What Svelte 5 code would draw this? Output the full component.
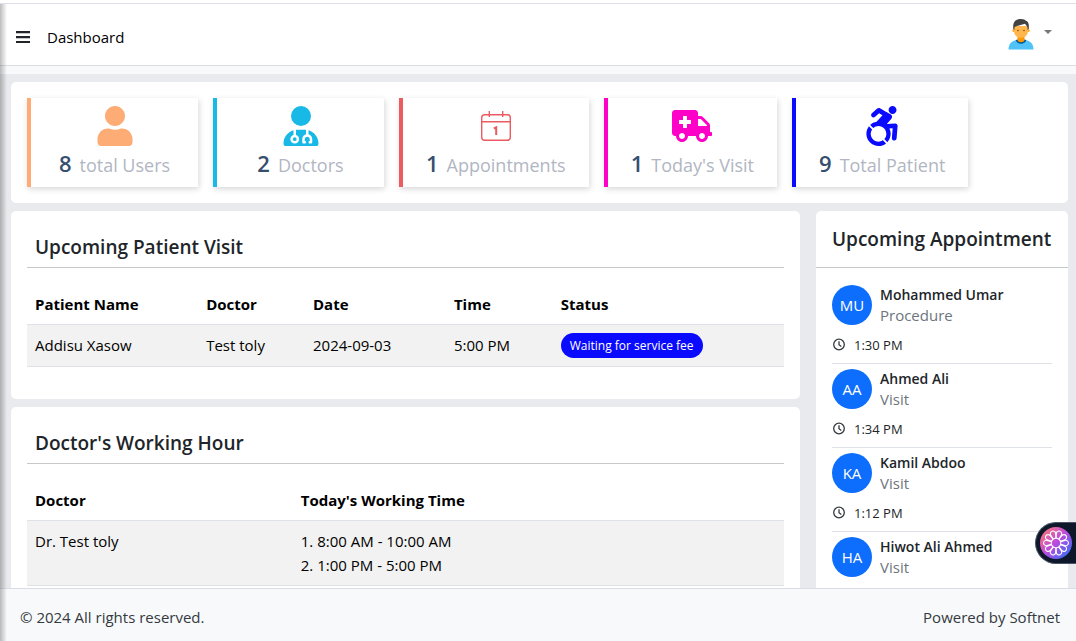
<script>
  const stats = [
    { icon: 'users', count: 8, label: 'total Users', tone: 'orange' },
    { icon: 'doctor', count: 2, label: 'Doctors', tone: 'cyan' },
    { icon: 'calendar', count: 1, label: 'Appointments', tone: 'red' },
    { icon: 'ambulance', count: 1, label: "Today's Visit", tone: 'pink' },
    { icon: 'wheelchair', count: 9, label: 'Total Patient', tone: 'blue' }
  ];
  const visits = [
    { name: 'Addisu Xasow', doctor: 'Test toly', date: '2024-09-03', time: '5:00 PM', status: 'Waiting for service fee' }
  ];
  const hours = [
    { doctor: 'Dr. Test toly', slots: ['8:00 AM - 10:00 AM', '1:00 PM - 5:00 PM'] }
  ];
  const appointments = [
    { initials: 'MU', name: 'Mohammed Umar', kind: 'Procedure', time: '1:30 PM' },
    { initials: 'AA', name: 'Ahmed Ali', kind: 'Visit', time: '1:34 PM' },
    { initials: 'KA', name: 'Kamil Abdoo', kind: 'Visit', time: '1:12 PM' },
    { initials: 'HA', name: 'Hiwot Ali Ahmed', kind: 'Visit', time: '' }
  ];
  const petals = [0, 1, 2, 3, 4, 5, 6, 7, 8, 9];
</script>

<div class="page">
  <header>
    <button class="plain menu" aria-label="Toggle sidebar">
      <svg width="16" height="14" viewBox="0 0 16 14"><path d="M1 2.200h14M1 7.200h14M1 12h14" stroke="#212529" stroke-width="2.200" /></svg>
    </button>
    <a href="#dashboard">Dashboard</a>
    <button class="plain account" aria-label="Account menu">
      <svg width="26" height="32" viewBox="0 0 26 32">
        <path d="M.5 31.500C.5 24 6 21.500 13 21.500S25.500 24 25.500 31.500z" fill="#4fc3f7" />
        <path d="M7.800 22c1 5 9.400 5 10.400 0l-2-.6H9.800z" fill="#01579b" />
        <path d="M9.500 17h7v5c-.6 3-6.400 3-7 0z" fill="#ff9800" />
        <circle cx="5.800" cy="12.500" r="1.500" fill="#ffa726" />
        <circle cx="20.200" cy="12.500" r="1.500" fill="#ffa726" />
        <path d="M6 8h14v5c0 9-14 9-14 0z" fill="#ffb74d" />
        <path d="M5.300 11C4.500 3.500 8 1 13 1c3 0 4 .8 4.500 1.500 3 .5 3.800 4 3.200 8.500L19.500 12V9L17 5.800 9 8 6.500 9v3z" fill="#424242" />
        <circle cx="10" cy="12.500" r=".8" fill="#784719" />
        <circle cx="16" cy="12.500" r=".8" fill="#784719" />
      </svg>
      <span class="caret"></span>
    </button>
  </header>

  <main>
    <section class="panel stats">
      {#each stats as s}
        <article class={s.tone}>
          {#if s.icon === 'users'}
            <svg viewBox="0 0 448 512"><path d="M224 256c70.700 0 128-57.300 128-128S294.700 0 224 0 96 57.300 96 128s57.300 128 128 128zm89.600 32h-16.700c-22.200 10.200-46.900 16-72.900 16s-50.600-5.800-72.900-16h-16.700C60.200 288 0 348.200 0 422.400V464c0 26.500 21.500 48 48 48h352c26.500 0 48-21.500 48-48v-41.600c0-74.200-60.200-134.400-134.400-134.400z" /></svg>
          {:else if s.icon === 'doctor'}
            <svg viewBox="0 0 448 512"><path d="M224 256a128 128 0 1 0 0-256 128 128 0 1 0 0 256zm-96 55.200C54 332.900 0 401.300 0 482.300C0 498.700 13.300 512 29.700 512H418.300c16.400 0 29.700-13.300 29.700-29.700c0-81-54-149.400-128-171.100V362c27.600 7.100 48 32.200 48 62v40c0 8.800-7.200 16-16 16H336c-8.800 0-16-7.200-16-16s7.200-16 16-16V424c0-17.700-14.300-32-32-32s-32 14.300-32 32v24c8.800 0 16 7.200 16 16s-7.200 16-16 16H256c-8.800 0-16-7.200-16-16V424c0-29.800 20.400-54.900 48-62V304.900c-6-.6-12.100-.9-18.300-.9H178.300c-6.200 0-12.300 .3-18.300 .9v65.400c23.100 6.900 40 28.300 40 53.700c0 30.900-25.100 56-56 56s-56-25.100-56-56c0-25.400 16.900-46.800 40-53.700V311.200zM144 448a24 24 0 1 0 0-48 24 24 0 1 0 0 48z" /></svg>
          {:else if s.icon === 'calendar'}
            <svg viewBox="0 0 40 40" class="line"><rect x="5.700" y="8.700" width="28.600" height="25.600" rx="3" /><path d="M5.700 15.700h28.600M13.300 5v6M26.700 5v6" /><path d="M17.800 22.500l2.400-1.200v7.700" class="bold" /></svg>
          {:else if s.icon === 'ambulance'}
            <svg viewBox="0 0 640 512"><path d="M624 352h-16V243.900c0-12.700-5.100-24.900-14.100-33.900L494 110.100c-9-9-21.200-14.100-33.900-14.100H416V48c0-26.500-21.500-48-48-48H48C21.500 0 0 21.500 0 48v320c0 26.500 21.500 48 48 48h16c0 53 43 96 96 96s96-43 96-96h128c0 53 43 96 96 96s96-43 96-96h48c8.800 0 16-7.200 16-16v-32c0-8.800-7.200-16-16-16zM160 464c-26.500 0-48-21.500-48-48s21.500-48 48-48 48 21.500 48 48-21.500 48-48 48zm144-248c0 4.400-3.600 8-8 8h-56v56c0 4.400-3.600 8-8 8h-48c-4.400 0-8-3.600-8-8v-56h-56c-4.400 0-8-3.600-8-8v-48c0-4.400 3.600-8 8-8h56v-56c0-4.400 3.600-8 8-8h48c4.400 0 8 3.600 8 8v56h56c4.400 0 8 3.600 8 8v48zm176 248c-26.500 0-48-21.500-48-48s21.500-48 48-48 48 21.500 48 48-21.500 48-48 48zm80-208H416V144h44.100l99.900 99.900V256z" /></svg>
          {:else}
            <svg viewBox="0 0 448 512"><path d="M423.900 255.800L411 413.100c-3.300 40.700-63.900 35.100-60.600-4.900l10-122.500-41.100 2.300c10.100 20.700 15.800 43.900 15.800 68.500 0 41.200-16.100 78.700-42.300 106.500l-39.300-39.300c57.900-63.700 13.100-167.200-74-167.200-25.900 0-49.500 9.900-67.200 26L73 243.200c22-20.700 50.100-35.100 81.400-40.200l75.300-85.700-42.600-24.800-51.600 46c-30 26.800-70.600-18.500-40.500-45.400l68-60.700c9.800-8.800 24.100-10.200 35.500-3.600 0 0 139.300 80.900 139.500 81.100 16.200 10.100 20.700 36 6.100 52.600L285.700 229l106.100-5.900c18.500-1.100 33.600 14.400 32.100 32.700zm-64.900-154c28.100 0 50.900-22.800 50.900-50.900C409.900 22.800 387.100 0 359 0c-28.100 0-50.900 22.800-50.900 50.900 0 28.100 22.800 50.900 50.900 50.900zM179.600 456.500c-80.600 0-127.400-90.600-82.700-156.100l-39.700-39.700C36.400 287 24 320.300 24 356.400c0 130.700 150.700 201.400 251.400 122.500l-39.700-39.700c-16 10.900-35.300 17.300-56.100 17.300z" /></svg>
          {/if}
          <p><strong>{s.count}</strong><span>{s.label}</span></p>
        </article>
      {/each}
    </section>

    <div class="columns">
      <div class="left">
        <section class="panel">
          <h2>Upcoming Patient Visit</h2>
          <table class="visits">
            <thead>
              <tr><th>Patient Name</th><th>Doctor</th><th>Date</th><th>Time</th><th>Status</th></tr>
            </thead>
            <tbody>
              {#each visits as v}
                <tr><td>{v.name}</td><td>{v.doctor}</td><td>{v.date}</td><td>{v.time}</td><td class="status"><span class="badge">{v.status}</span></td></tr>
              {/each}
            </tbody>
          </table>
        </section>

        <section class="panel">
          <h2>Doctor's Working Hour</h2>
          <table class="hours">
            <thead>
              <tr><th>Doctor</th><th>Today's Working Time</th></tr>
            </thead>
            <tbody>
              {#each hours as h}
                <tr>
                  <td>{h.doctor}</td>
                  <td>{#each h.slots as slot, i}<div>{i + 1}. {slot}</div>{/each}</td>
                </tr>
              {/each}
            </tbody>
          </table>
        </section>
      </div>

      <aside class="panel">
        <h2>Upcoming Appointment</h2>
        <ul>
          {#each appointments as a}
            <li>
              <div class="person">
                <span class="avatar">{a.initials}</span>
                <div>
                  <div class="name">{a.name}</div>
                  <div class="kind">{a.kind}</div>
                </div>
              </div>
              {#if a.time}
                <div class="time">
                  <svg width="14" height="14" viewBox="0 0 14 14" fill="none" stroke="#343a40" stroke-width="1.300"><circle cx="7" cy="6.500" r="5.300" /><path d="M7 3.300v3.400l2.300 1.800" /></svg>
                  {a.time}
                </div>
              {/if}
            </li>
          {/each}
        </ul>
      </aside>
    </div>
  </main>

  <footer>
    <span>© 2024 All rights reserved.</span>
    <span>Powered by Softnet</span>
  </footer>

  <div class="edge"></div>

  <button class="plain helper" aria-label="Open assistant">
    <svg width="32" height="32" viewBox="0 0 32 32">
      <defs>
        <linearGradient id="glow" x1="0" y1="0" x2="1" y2="1">
          <stop offset="0.100" stop-color="#f9737c" />
          <stop offset="0.500" stop-color="#b94be0" />
          <stop offset="0.900" stop-color="#3b6cf8" />
        </linearGradient>
      </defs>
      <circle cx="16" cy="16" r="16" fill="url(#glow)" />
      <g fill="none" stroke="#fff" stroke-width="1.100" stroke-linejoin="round">
        {#each petals as p}
          <path d="M14.600 11.300L13.400 7a2.700 2.700 0 1 1 5.200 0L17.400 11.300z" transform="rotate({p * 36 + 18} 16 16)" />
        {/each}
      </g>
    </svg>
  </button>
</div>

<style>
  :global(body) {
    margin: 0;
  }
  .page {
    position: relative;
    display: flex;
    flex-direction: column;
    height: 100vh;
    overflow: hidden;
    background: #e9eaed;
    color: #212529;
    font: 15px/24px "Open Sans", "Noto Sans", sans-serif;
  }
  .plain {
    border: 0;
    padding: 0;
    background: none;
    display: flex;
    align-items: center;
    cursor: pointer;
  }
  header {
    display: flex;
    align-items: center;
    margin-top: 3px;
    padding: 4px 24px 0 15px;
    height: 57px;
    border-top: 1px solid #dee2e6;
    border-bottom: 1px solid #dbdfe4;
    box-shadow: 0 -3px #fff, 0 8px #f8f9fb;
    background: #fff;
    flex: none;
  }
  header a {
    margin-left: 16px;
    color: #000;
    text-decoration: none;
  }
  .account {
    margin-left: auto;
    margin-bottom: 6px;
    gap: 10px;
  }
  .caret {
    margin-bottom: 4px;
    border: 4px solid transparent;
    border-top-color: #777;
    border-bottom: 0;
  }
  main {
    flex: 1;
    min-height: 0;
    overflow: hidden;
    margin-top: 8px;
    padding: 8px 8px 0 11px;
  }
  .panel {
    background: #fff;
    border-radius: 5px;
    padding: 16px;
  }
  .stats {
    display: flex;
    gap: 15px;
    margin-bottom: 8px;
  }
  article {
    box-sizing: border-box;
    min-width: 171px;
    padding: 8px 23px 9px;
    border-left: 4px solid var(--tone);
    box-shadow: 1px 2px 6px rgba(0, 0, 0, 0.16);
    color: var(--tone);
    text-align: center;
  }
  .orange { --tone: #fcac74; }
  .cyan { --tone: #18b9e6; }
  .red { --tone: #eb5c60; }
  .pink { --tone: #ff00c8; }
  .blue { --tone: #0a0aff; }
  article svg {
    display: block;
    width: 40px;
    height: 40px;
    margin: 0 auto;
    fill: currentColor;
  }
  article .line {
    fill: none;
    stroke: currentColor;
    stroke-width: 1.400;
  }
  article .bold {
    stroke-width: 2;
  }
  article p {
    display: flex;
    justify-content: center;
    align-items: baseline;
    gap: 8px;
    margin: 4px 0 0;
    line-height: 26px;
    font-size: 18px;
    color: #b1b6c2;
    white-space: nowrap;
  }
  strong {
    font-size: 22px;
    font-weight: 600;
    color: #364f6f;
  }
  .columns {
    display: grid;
    grid-template-columns: minmax(0, 1fr) 252px;
    gap: 16px;
  }
  .left {
    display: flex;
    flex-direction: column;
    gap: 8px;
  }
  h2 {
    margin: 0 0 16px;
    padding: 8px;
    border-bottom: 1px solid #c6c7c8;
    font-size: 19px;
    line-height: 24px;
    font-weight: 600;
    white-space: nowrap;
  }
  table {
    width: 100%;
    margin-bottom: 16px;
    border-collapse: collapse;
    table-layout: fixed;
    color: #000;
  }
  th,
  td {
    padding: 8px;
    border-bottom: 1px solid #dee2e6;
    text-align: left;
    vertical-align: top;
  }
  th {
    font-weight: 700;
  }
  tbody tr {
    background: #f2f2f2;
  }
  .visits th:nth-child(1) { width: 20.5%; }
  .visits th:nth-child(2) { width: 12%; }
  .visits th:nth-child(3) { width: 16.5%; }
  .visits th:nth-child(4) { width: 12%; }
  .hours th:first-child { width: 33%; }
  .badge {
    display: inline-block;
    padding: 0 9px;
    border-radius: 13px;
    background: #0a0aff;
    color: #fff;
    font-size: 12px;
    line-height: 25px;
  }
  .status {
    padding-block: 8px;
    line-height: 0;
  }
  aside {
    align-self: start;
  }
  aside h2 {
    margin: 0 -16px 12px;
    padding: 0 16px 16px;
  }
  ul {
    margin: 0;
    padding: 0;
    list-style: none;
  }
  li {
    padding: 4px 0 6px;
    border-bottom: 1px solid #dee2e6;
  }
  li:last-child {
    padding-bottom: 37px;
  }
  .person {
    display: flex;
    align-items: center;
    gap: 8px;
    line-height: 21px;
  }
  .avatar {
    display: grid;
    place-items: center;
    width: 40px;
    height: 40px;
    border-radius: 50%;
    background: #0d6efd;
    color: #fff;
  }
  .name {
    font-size: 14px;
    font-weight: 600;
  }
  .kind {
    color: #6c757d;
  }
  .time {
    display: flex;
    align-items: center;
    gap: 8px;
    margin-top: 7px;
    font-size: 13px;
  }
  footer {
    display: flex;
    justify-content: space-between;
    padding: 16px 16px 12px 20px;
    border-top: 1px solid #d8dde5;
    background: #f8f9fb;
    color: #343a40;
    flex: none;
  }
  .edge {
    position: absolute;
    inset: 4px auto 0 0;
    width: 7px;
    background: linear-gradient(to right, rgba(0, 0, 0, 0.26), transparent);
  }
  .helper {
    position: absolute;
    right: 0;
    bottom: 77px;
    padding: 4px;
    border: 1px solid #4b5563;
    border-right: 0;
    border-radius: 21px 0 0 21px;
    background: #0f172a;
  }
</style>
